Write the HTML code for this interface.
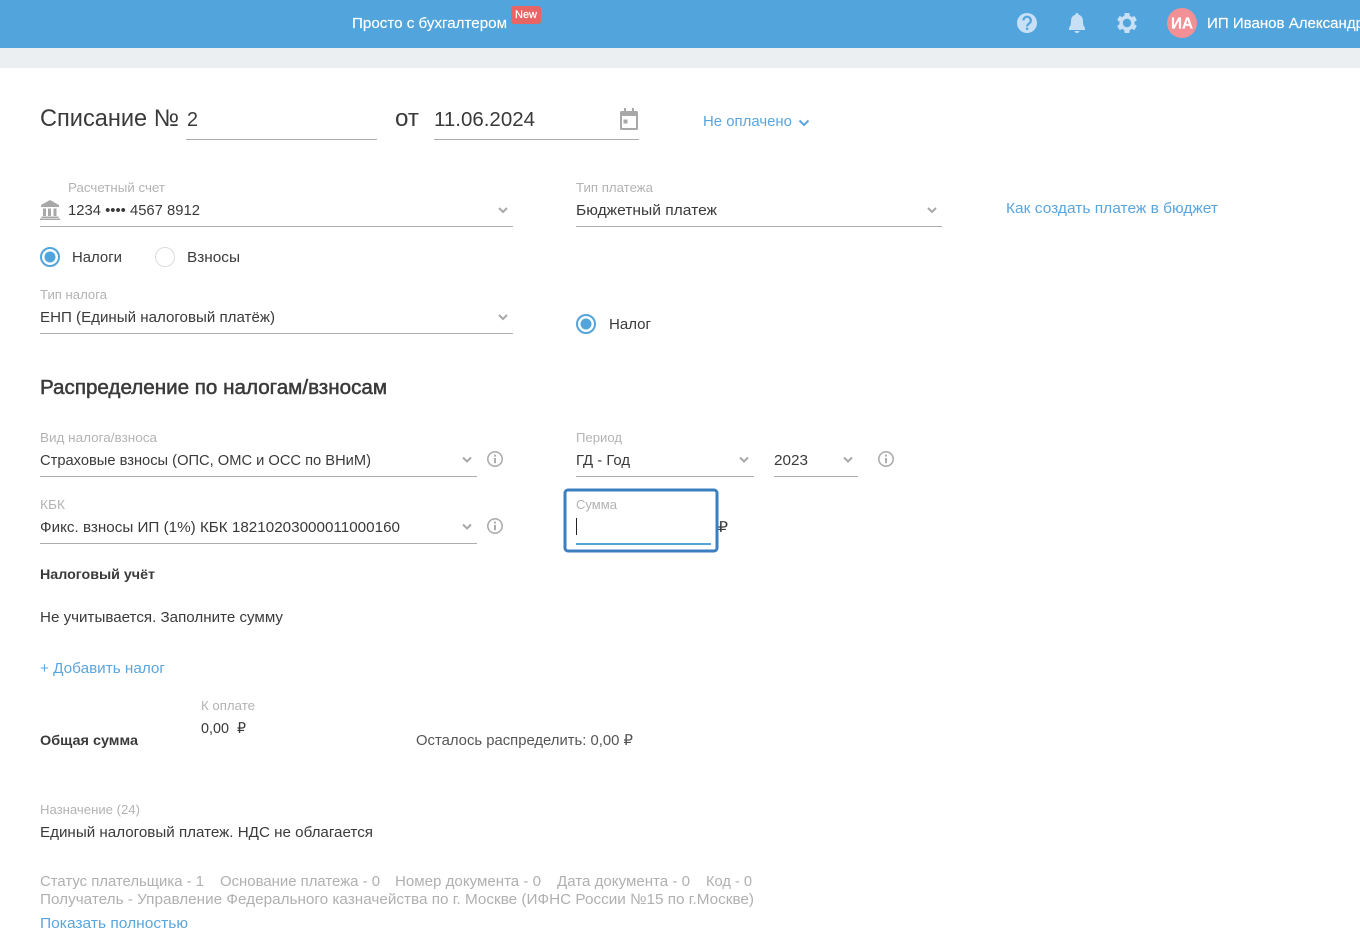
<!DOCTYPE html>
<html lang="ru"><head><meta charset="utf-8"><title>Списание</title>
<style>
html,body{margin:0;padding:0;background:#fff;width:1360px;height:936px;overflow:hidden}
svg{display:block;font-family:"Liberation Sans",sans-serif}
text{fill:#3a3a3a;font-size:15px}
.l{font-size:13px;fill:#b3b3b3}
.b{fill:#5aa5de}
.g{fill:#b0b0b0}
.w{fill:#fff;stroke:#fff;stroke-width:.15px}
.s{stroke:#3a3a3a;stroke-width:.35px}
.ln{stroke:#adadad;stroke-width:1}
.ch{fill:none;stroke:#a8a8a8;stroke-width:2}
.i{fill:none;stroke:#adadad;stroke-width:1.6}
</style></head><body>
<svg width="1360" height="936" viewBox="0 0 1360 936" xmlns="http://www.w3.org/2000/svg">
<defs>
<path id="c" d="M-4 -2L0 2L4 -2" class="ch"/>
<g id="info"><circle r="7.2" class="i"/><rect x="-1" y="-1" width="2" height="5.2" fill="#adadad"/><rect x="-1" y="-4.4" width="2" height="2" fill="#adadad"/></g>
</defs>
<rect width="1360" height="48" fill="#52a5dc"/>
<rect y="48" width="1360" height="20" fill="#ebeff2"/>
<text x="352" y="28" class="w" textLength="155" lengthAdjust="spacingAndGlyphs">Просто с бухгалтером</text>
<rect x="511" y="6" width="30" height="18" rx="3" fill="#e96464"/>
<text x="515" y="18" class="w s" style="font-size:11px;stroke:#fff;stroke-width:.2px" textLength="22" lengthAdjust="spacingAndGlyphs">New</text>
<circle cx="1027" cy="23" r="10" fill="#c8e0f6"/>
<path d="M1023.4 20.4a3.7 3.7 0 1 1 5.9 3c-1.400 1-2.200 1.500-2.200 3" fill="none" stroke="#52a5dc" stroke-width="2.200"/>
<rect x="1026" y="27.600" width="2.300" height="2.300" fill="#52a5dc"/>
<path d="M1077 13c1 0 1.600.7 1.600 1.700 2.900.8 4.400 3.200 4.400 6.300 0 3.500.6 5.300 2 6.600V30h-16v-2.400c1.400-1.300 2-3.100 2-6.600 0-3.100 1.500-5.500 4.400-6.300 0-1 .6-1.700 1.600-1.700zM1074.500 31h5a2.500 2 0 0 1-5 0z" fill="#c8e0f6"/>
<g transform="translate(1127 23)" fill="#c8e0f6">
<rect x="-2.600" y="-10" width="5.200" height="20" rx="1"/>
<rect x="-2.600" y="-10" width="5.200" height="20" rx="1" transform="rotate(60)"/>
<rect x="-2.600" y="-10" width="5.200" height="20" rx="1" transform="rotate(120)"/>
<circle r="7.600"/>
<circle r="4.200" fill="#52a5dc"/>
</g>
<circle cx="1182" cy="23" r="15" fill="#f39096"/>
<text x="1171" y="28.500" class="w" style="font-size:16px;font-weight:bold" textLength="22" lengthAdjust="spacingAndGlyphs">ИА</text>
<text x="1207" y="28" class="w" textLength="157" lengthAdjust="spacingAndGlyphs">ИП Иванов Александр</text>

<text x="40" y="126" style="font-size:24px" textLength="139" lengthAdjust="spacingAndGlyphs">Списание №</text>
<text x="187" y="126" style="font-size:20px" textLength="11" lengthAdjust="spacingAndGlyphs">2</text>
<line x1="186" x2="377" y1="139.500" y2="139.500" class="ln"/>
<text x="395" y="126" style="font-size:24px" textLength="24" lengthAdjust="spacingAndGlyphs">от</text>
<text x="434" y="126" style="font-size:20px" textLength="101" lengthAdjust="spacingAndGlyphs">11.06.2024</text>
<line x1="434" x2="639" y1="139.500" y2="139.500" class="ln"/>
<path fill="#a8a8a8" fill-rule="evenodd" d="M624 108h2v3h6v-3h2v3h2.500a1.500 1.500 0 0 1 1.500 1.500v16a1.500 1.500 0 0 1-1.500 1.500h-15a1.500 1.500 0 0 1-1.500-1.500v-16a1.500 1.500 0 0 1 1.500-1.500h2.500zM622 116v12h14v-12zM623.500 119.500h4v4h-4z"/>
<text x="703" y="126" class="b" style="font-size:14.500px" textLength="89" lengthAdjust="spacingAndGlyphs">Не оплачено</text>
<path d="M799.500 120.500L804 125L808.500 120.500" fill="none" stroke="#5aa5de" stroke-width="2"/>

<text x="68" y="192" class="l" textLength="97" lengthAdjust="spacingAndGlyphs">Расчетный счет</text>
<path fill="#a8a8a8" d="M50 200l9 5v2H41v-2zM43 208.500h3v7.500h-3zM48 208.500h3v7.500h-3zM53.500 208.500h3v7.500h-3zM41.500 216.500h17v1.500h-17zM40 218.500h20v1.500H40z"/>
<text x="68" y="215" textLength="132" lengthAdjust="spacingAndGlyphs">1234 •••• 4567 8912</text>
<line x1="40" x2="513" y1="226.500" y2="226.500" class="ln"/>
<use href="#c" x="503" y="210"/>
<text x="576" y="192" class="l" textLength="77" lengthAdjust="spacingAndGlyphs">Тип платежа</text>
<text x="576" y="215" textLength="141" lengthAdjust="spacingAndGlyphs">Бюджетный платеж</text>
<line x1="576" x2="942" y1="226.500" y2="226.500" class="ln"/>
<use href="#c" x="932" y="210"/>
<text x="1006" y="213" class="b" textLength="212" lengthAdjust="spacingAndGlyphs">Как создать платеж в бюджет</text>

<circle cx="50" cy="257" r="9" fill="#fff" stroke="#52a5dc" stroke-width="2"/>
<circle cx="50" cy="257" r="5.500" fill="#52a5dc"/>
<text x="72" y="262" textLength="50" lengthAdjust="spacingAndGlyphs">Налоги</text>
<circle cx="165" cy="257" r="9.500" fill="#fff" stroke="#dcdcdc" stroke-width="1"/>
<text x="187" y="262" textLength="53" lengthAdjust="spacingAndGlyphs">Взносы</text>

<text x="40" y="299" class="l" textLength="67" lengthAdjust="spacingAndGlyphs">Тип налога</text>
<text x="40" y="322" textLength="235" lengthAdjust="spacingAndGlyphs">ЕНП (Единый налоговый платёж)</text>
<line x1="40" x2="513" y1="333.500" y2="333.500" class="ln"/>
<use href="#c" x="503" y="317"/>
<circle cx="586" cy="324" r="9" fill="#fff" stroke="#52a5dc" stroke-width="2"/>
<circle cx="586" cy="324" r="5.500" fill="#52a5dc"/>
<text x="609" y="329" textLength="42" lengthAdjust="spacingAndGlyphs">Налог</text>

<text x="40" y="394" class="s" style="font-size:20px;stroke-width:.5px" textLength="347" lengthAdjust="spacingAndGlyphs">Распределение по налогам/взносам</text>

<text x="40" y="442" class="l" textLength="117" lengthAdjust="spacingAndGlyphs">Вид налога/взноса</text>
<text x="40" y="465" textLength="331" lengthAdjust="spacingAndGlyphs">Страховые взносы (ОПС, ОМС и ОСС по ВНиМ)</text>
<line x1="40" x2="477" y1="476.500" y2="476.500" class="ln"/>
<use href="#c" x="467" y="459.500"/>
<use href="#info" x="495" y="459"/>
<text x="576" y="442" class="l" textLength="46" lengthAdjust="spacingAndGlyphs">Период</text>
<text x="576" y="465" textLength="54" lengthAdjust="spacingAndGlyphs">ГД - Год</text>
<line x1="576" x2="754" y1="476.500" y2="476.500" class="ln"/>
<use href="#c" x="744" y="459.500"/>
<text x="774" y="465" textLength="34" lengthAdjust="spacingAndGlyphs">2023</text>
<line x1="774" x2="858" y1="476.500" y2="476.500" class="ln"/>
<use href="#c" x="848" y="459.500"/>
<use href="#info" x="886" y="459"/>

<text x="40" y="509" class="l" textLength="25" lengthAdjust="spacingAndGlyphs">КБК</text>
<text x="40" y="532" textLength="360" lengthAdjust="spacingAndGlyphs">Фикс. взносы ИП (1%) КБК 18210203000011000160</text>
<line x1="40" x2="477" y1="543.500" y2="543.500" class="ln"/>
<use href="#c" x="467" y="526.500"/>
<use href="#info" x="495" y="526"/>

<text x="718" y="532" textLength="10" lengthAdjust="spacingAndGlyphs">₽</text>
<rect x="565" y="490" width="152" height="61" rx="3" fill="#fff" fill-opacity="0" stroke="#3c7fc0" stroke-width="3"/>
<text x="576" y="509" class="l" textLength="41" lengthAdjust="spacingAndGlyphs">Сумма</text>
<line x1="576.500" x2="576.500" y1="518" y2="535" stroke="#222" stroke-width="1"/>
<line x1="576" x2="711" y1="544" y2="544" stroke="#52a5dc" stroke-width="2"/>

<text x="40" y="579" style="font-size:14px;font-weight:bold" textLength="115" lengthAdjust="spacingAndGlyphs">Налоговый учёт</text>
<text x="40" y="622" textLength="243" lengthAdjust="spacingAndGlyphs">Не учитывается. Заполните сумму</text>
<text x="40" y="673" class="b" textLength="125" lengthAdjust="spacingAndGlyphs">+ Добавить налог</text>

<text x="201" y="710" class="l" textLength="54" lengthAdjust="spacingAndGlyphs">К оплате</text>
<text x="201" y="733" textLength="28" lengthAdjust="spacingAndGlyphs">0,00</text>
<text x="237" y="733" textLength="9" lengthAdjust="spacingAndGlyphs">₽</text>
<text x="40" y="745" style="font-size:14px;font-weight:bold" textLength="98" lengthAdjust="spacingAndGlyphs">Общая сумма</text>
<text x="416" y="745" style="fill:#555" textLength="217" lengthAdjust="spacingAndGlyphs">Осталось распределить: 0,00 ₽</text>

<text x="40" y="814" class="l" textLength="100" lengthAdjust="spacingAndGlyphs">Назначение (24)</text>
<text x="40" y="837" textLength="333" lengthAdjust="spacingAndGlyphs">Единый налоговый платеж. НДС не облагается</text>

<text x="40" y="886" class="g" textLength="164" lengthAdjust="spacingAndGlyphs">Статус плательщика - 1</text>
<text x="220" y="886" class="g" textLength="160" lengthAdjust="spacingAndGlyphs">Основание платежа - 0</text>
<text x="395" y="886" class="g" textLength="146" lengthAdjust="spacingAndGlyphs">Номер документа - 0</text>
<text x="557" y="886" class="g" textLength="133" lengthAdjust="spacingAndGlyphs">Дата документа - 0</text>
<text x="706" y="886" class="g" textLength="46" lengthAdjust="spacingAndGlyphs">Код - 0</text>
<text x="40" y="904" class="g" textLength="714" lengthAdjust="spacingAndGlyphs">Получатель - Управление Федерального казначейства по г. Москве (ИФНС России №15 по г.Москве)</text>
<text x="40" y="928" class="b" textLength="148" lengthAdjust="spacingAndGlyphs">Показать полностью</text>
</svg>
</body></html>
